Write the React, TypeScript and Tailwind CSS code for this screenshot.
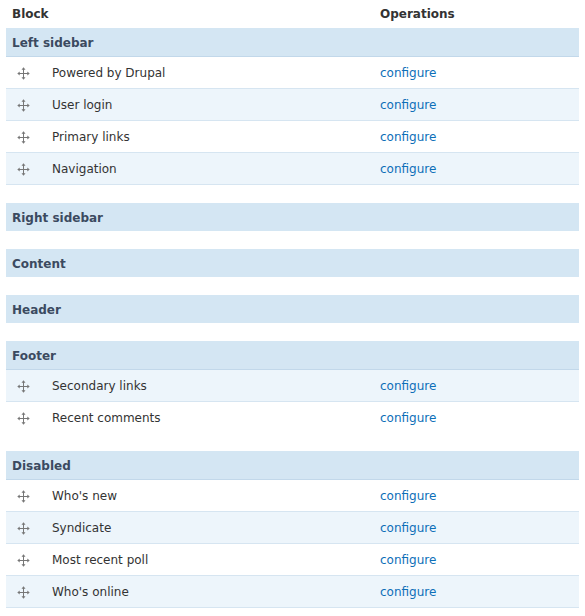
import React from 'react';

type Block = { name: string; stripe: boolean };
type Region = { title: string; blocks: Block[]; lastBorder: boolean };

const regions: Region[] = [
  {
    title: 'Left sidebar',
    lastBorder: true,
    blocks: [
      { name: 'Powered by Drupal', stripe: false },
      { name: 'User login', stripe: true },
      { name: 'Primary links', stripe: false },
      { name: 'Navigation', stripe: true },
    ],
  },
  { title: 'Right sidebar', blocks: [], lastBorder: false },
  { title: 'Content', blocks: [], lastBorder: false },
  { title: 'Header', blocks: [], lastBorder: false },
  {
    title: 'Footer',
    lastBorder: false,
    blocks: [
      { name: 'Secondary links', stripe: true },
      { name: 'Recent comments', stripe: false },
    ],
  },
  {
    title: 'Disabled',
    lastBorder: true,
    blocks: [
      { name: "Who's new", stripe: false },
      { name: 'Syndicate', stripe: true },
      { name: 'Most recent poll', stripe: false },
      { name: "Who's online", stripe: true },
    ],
  },
];

function DragHandle() {
  // four-way move arrows
  return (
    <svg width="13" height="13" viewBox="0 0 13 13" className="text-[#777]">
      <path d="M6.5 2v9M2 6.5h9" stroke="currentColor" strokeWidth="1" fill="none" />
      <path d="M6.5 0.3l-2 2.4h4zM6.5 12.7l-2-2.4h4zM0.3 6.5l2.4-2v4zM12.7 6.5l-2.4-2v4z" fill="currentColor" />
    </svg>
  );
}

export default function App() {
  return (
    <div className="min-h-screen bg-white px-[6px] text-[12px] text-[#333] font-['DejaVu_Sans',sans-serif]">
      <div className="grid grid-cols-[374px_1fr] h-[28px] items-center font-bold">
        <div className="pl-[6px]">Block</div>
        <div>Operations</div>
      </div>

      {regions.map((region, i) => (
        <div key={region.title} className={i > 0 ? 'mt-[18px]' : ''}>
          <div
            className={
              'flex items-center pl-[6px] pt-[2px] bg-[#d4e6f3] font-bold text-[#3b4a60] ' +
              (region.blocks.length ? 'h-[29px] border-b border-[#c2d8ea]' : 'h-[28px]')
            }
          >
            {region.title}
          </div>
          {region.blocks.map((b, j) => {
            const last = j === region.blocks.length - 1;
            const bordered = !last || region.lastBorder;
            return (
              <div
                key={b.name}
                className={
                  'grid grid-cols-[374px_1fr] items-center pt-[1px] ' +
                  (bordered ? 'h-[32px] border-b border-[#d6e5f1] ' : 'h-[31px] ') +
                  (b.stripe ? 'bg-[#edf5fb]' : 'bg-white')
                }
              >
                <div className="flex items-center">
                  <span className="pl-[11px] w-[46px] flex">
                    <DragHandle />
                  </span>
                  <span>{b.name}</span>
                </div>
                <div>
                  <a href="#" className="text-[#0d6fb8]">
                    configure
                  </a>
                </div>
              </div>
            );
          })}
        </div>
      ))}
    </div>
  );
}
